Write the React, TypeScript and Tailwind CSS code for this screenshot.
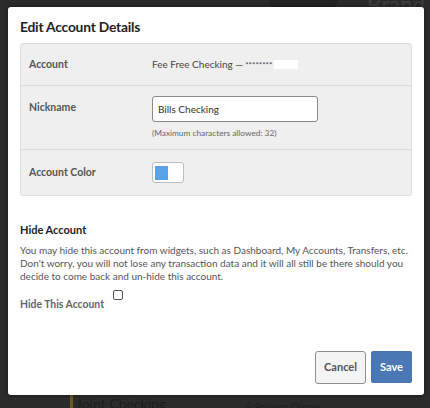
export default function App() {
  return (
    <div className="relative h-[408px] w-[430px] overflow-hidden bg-[#2b2b2b] font-['Lato',sans-serif]">
      {/* page behind the overlay */}
      <div className="absolute left-[268px] top-[-8px] h-[16px] w-[70px] rounded-full bg-[#232323]" />
      <div className="absolute left-[367px] top-[-12px] text-[22px] font-semibold text-[#3c3c3c]">Brand</div>
      <div className="absolute left-[70px] top-[394px] h-[14px] w-[3px] bg-[#6b5a1e]" />
      <div className="absolute left-[76px] top-[393px] text-[14px] text-[#1c1c1c]">Joint Checking</div>
      <div className="absolute left-[245px] top-[399px] text-[10px] text-[#1c1c1c]">&amp; Primary Owner</div>

      <div className="relative ml-[8px] mt-[7px] flex h-[388px] w-[416px] flex-col rounded-[3px] bg-white px-[12px] shadow-[0_0_4px_rgba(0,0,0,0.5)]">
        <h1 className="mt-[9px] text-[13.8px] font-bold leading-[21px] tracking-[-0.2px] text-[#222]">Edit Account Details</h1>

        <div className="mt-[6px] rounded-[3px] border border-[#dcdcdc] bg-[#efefef] text-[10.5px] text-[#555]">
          <div className="flex h-[42px] items-center border-b border-[#dcdcdc] px-[8px]">
            <div className="w-[123px] font-bold">Account</div>
            <div className="flex items-center text-[10px] text-[#444]">
              Fee Free Checking — <span className="ml-[2px] text-[8px]">********</span>
              <span className="ml-[2px] inline-block h-[9px] w-[24px] bg-white" />
            </div>
          </div>
          <div className="flex h-[64px] items-start border-b border-[#dcdcdc] px-[8px] pt-[10px]">
            <div className="mt-[4px] w-[123px] font-bold">Nickname</div>
            <div>
              <div className="flex h-[26px] w-[166px] items-center rounded-[3px] border border-[#8a8a8a] bg-white px-[5px] text-[10px] text-[#333]">
                Bills Checking
              </div>
              <div className="mt-[5px] text-[8.3px] text-[#666]">(Maximum characters allowed: 32)</div>
            </div>
          </div>
          <div className="flex h-[45px] items-center px-[8px]">
            <div className="w-[123px] font-bold">Account Color</div>
            <div className="flex h-[21px] w-[32px] items-center rounded-[3px] border border-[#bdbdbd] bg-white pl-[2px]">
              <div className="h-[14px] w-[13px] bg-[#5aa2e6]" />
            </div>
          </div>
        </div>

        <h2 className="mt-[26px] text-[11px] font-bold text-[#222]">Hide Account</h2>
        <p className="mt-[5px] text-[10px] leading-[13px] text-[#555]">
          You may hide this account from widgets, such as Dashboard, My Accounts, Transfers, etc. Don't worry, you will not
          lose any transaction data and it will all still be there should you decide to come back and un-hide this account.
        </p>
        <div className="mt-[4px] flex items-start">
          <div className="mt-[10px] text-[10.4px] font-bold text-[#666]">Hide This Account</div>
          <div className="ml-[9px] mt-[3px] h-[10px] w-[10px] rounded-[2px] border border-[#555] bg-white" />
        </div>

        <div className="mt-auto mb-[11px] flex justify-end gap-[5px]">
          <button className="h-[33px] w-[51px] rounded-[3px] border border-[#8f8f8f] bg-[#f4f4f4] text-[11px] font-bold text-[#555]">
            Cancel
          </button>
          <button className="h-[32px] w-[41px] rounded-[2px] bg-[#4a78b5] text-[11px] font-bold text-white">Save</button>
        </div>
      </div>
    </div>
  );
}
